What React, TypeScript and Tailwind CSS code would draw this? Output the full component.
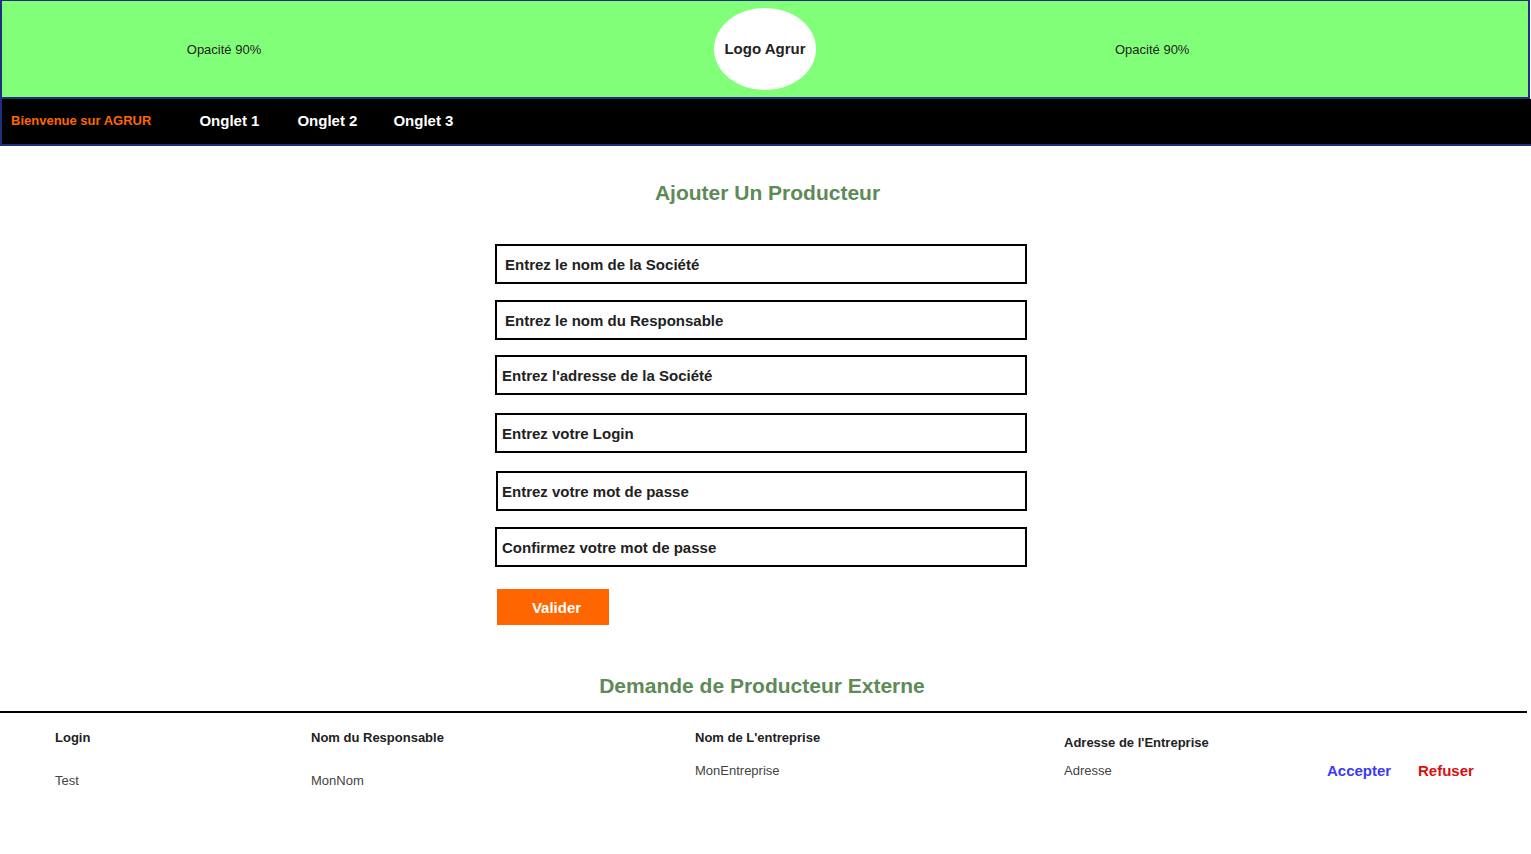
import React from "react";

const inputs = [
  { label: "Entrez le nom de la Société", pl: "pl-[8px]", ml: "ml-0", mt: "mt-0" },
  { label: "Entrez le nom du Responsable", pl: "pl-[8px]", ml: "ml-0", mt: "mt-[16px]" },
  { label: "Entrez l'adresse de la Société", pl: "pl-[5px]", ml: "ml-0", mt: "mt-[15px]" },
  { label: "Entrez votre Login", pl: "pl-[5px]", ml: "ml-0", mt: "mt-[18px]" },
  { label: "Entrez votre mot de passe", pl: "pl-[4px]", ml: "ml-[1px]", mt: "mt-[18px]" },
  { label: "Confirmez votre mot de passe", pl: "pl-[5px]", ml: "ml-0", mt: "mt-[16px]" },
];

export default function App() {
  return (
    <div className="w-[1531px] min-h-[854px] bg-white text-[#222] font-['Liberation_Sans',Arial,sans-serif]">
      {/* Header */}
      <header className="w-[1530px] h-[99px] bg-[#82ff78] border-2 border-t border-[#1e2f80] flex items-center">
        <div className="w-[444px] pt-[2px] text-center text-[13px] text-[#222]">Opacité 90%</div>
        <div className="ml-[268px] w-[102px] h-[82px] rounded-[50%] bg-white flex items-center justify-center pt-[1px] text-[15px] font-bold text-[#222]">
          Logo Agrur
        </div>
        <div className="ml-[299px] pt-[2px] text-[13px] text-[#222]">Opacité 90%</div>
      </header>

      {/* Nav */}
      <nav className="w-[1531px] h-[47px] bg-black border-l-2 border-b-2 border-[#1e2f80] flex items-center">
        <span className="ml-[9px] mb-[2px] text-[13px] font-bold text-[#ff6600]">Bienvenue sur AGRUR</span>
        <span className="ml-[48px] text-[15px] font-bold text-white">Onglet 1</span>
        <span className="ml-[38px] text-[15px] font-bold text-white">Onglet 2</span>
        <span className="ml-[36px] text-[15px] font-bold text-white">Onglet 3</span>
      </nav>

      {/* Form */}
      <main className="flex flex-col">
        <h1 className="mt-[34px] ml-[4px] text-center text-[21px] leading-[26px] font-bold text-[#5e8a57]">
          Ajouter Un Producteur
        </h1>
        <div className="mt-[38px] ml-[495px] w-[532px] flex flex-col">
          {inputs.map((f) => (
            <div
              key={f.label}
              className={`${f.mt} ${f.ml} h-[40px] border-2 border-black flex items-center pt-[2px] ${f.pl} text-[15px] font-bold text-[#222]`}
            >
              {f.label}
            </div>
          ))}
          <button className="mt-[22px] ml-[2px] w-[112px] h-[36px] pl-[7px] pt-[2px] bg-[#ff6600] text-white text-[15px] font-bold">
            Valider
          </button>
        </div>

        <h2 className="mt-[48px] mr-[7px] text-center text-[21px] leading-[26px] font-bold text-[#5e8a57]">
          Demande de Producteur Externe
        </h2>
        <div className="mt-[12px] w-[1527px] h-[2px] bg-black" />

        {/* Table row */}
        <div className="flex pl-[55px] text-[13px]">
          <div className="w-[256px] pt-[17px] flex flex-col">
            <span className="font-bold leading-[16px] text-[#222]">Login</span>
            <span className="mt-[27px] leading-[16px] text-[#444]">Test</span>
          </div>
          <div className="w-[384px] pt-[17px] flex flex-col">
            <span className="font-bold leading-[16px] text-[#222]">Nom du Responsable</span>
            <span className="mt-[27px] leading-[16px] text-[#444]">MonNom</span>
          </div>
          <div className="w-[369px] pt-[17px] flex flex-col">
            <span className="font-bold leading-[16px] text-[#222]">Nom de L'entreprise</span>
            <span className="mt-[17px] leading-[16px] text-[#444]">MonEntreprise</span>
          </div>
          <div className="w-[263px] pt-[22px] flex flex-col">
            <span className="font-bold leading-[16px] text-[#222]">Adresse de l'Entreprise</span>
            <span className="mt-[12px] leading-[16px] text-[#444]">Adresse</span>
          </div>
          <div className="w-[91px] pt-[49px]">
            <span className="text-[15px] font-bold leading-[18px] text-[#3b3bf5]">Accepter</span>
          </div>
          <div className="pt-[49px]">
            <span className="text-[15px] font-bold leading-[18px] text-[#d90f0f]">Refuser</span>
          </div>
        </div>
      </main>
    </div>
  );
}
